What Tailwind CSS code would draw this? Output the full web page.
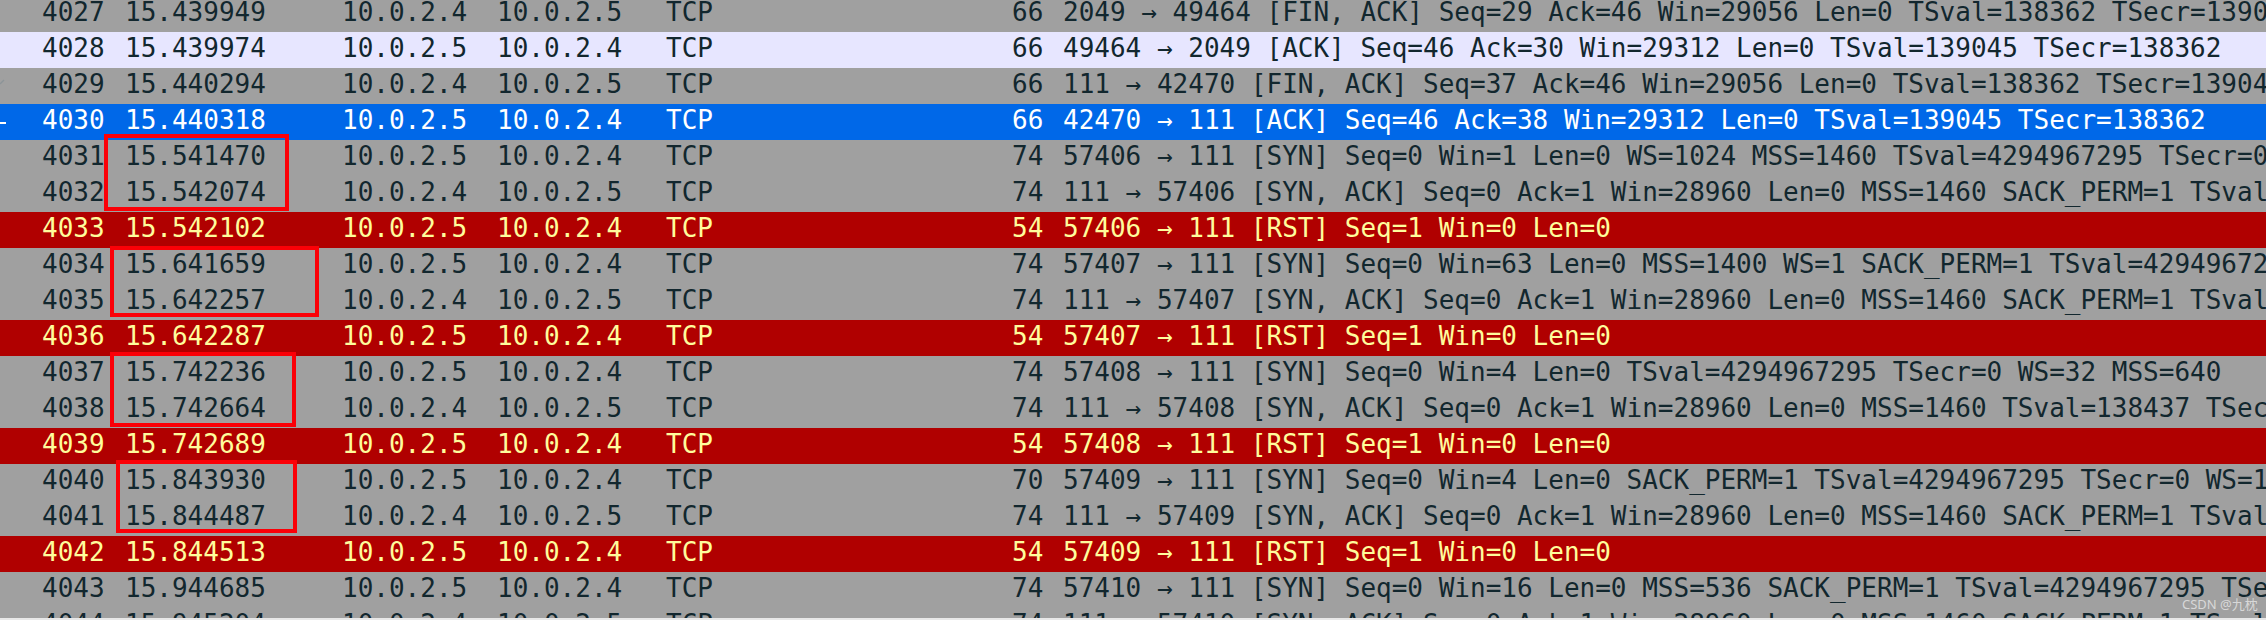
<!DOCTYPE html>
<html lang="en">
<head>
  <meta charset="UTF-8" />
  <title>Wireshark capture</title>
  <script src="https://cdn.jsdelivr.net/npm/@tailwindcss/browser@4"></script>
</head>
<body class="bg-[#e8e8e8]">
  <div class="relative w-[2266px] h-[620px] overflow-hidden">
    <div class="h-[618px] overflow-hidden bg-[#a0a0a0] font-['DejaVu_Sans_Mono',monospace] text-[26px] leading-[32px] text-[#12272e] whitespace-nowrap">
      <div class="-mt-[4px]">
        <div class="flex h-9"><span class="w-[125px] shrink-0 pl-[42px]">4027</span><span class="w-[217px] shrink-0">15.439949</span><span class="w-[155px] shrink-0">10.0.2.4</span><span class="w-[169px] shrink-0">10.0.2.5</span><span class="w-[346px] shrink-0">TCP</span><span class="w-[51px] shrink-0">66</span><span>2049 → 49464 [FIN, ACK] Seq=29 Ack=46 Win=29056 Len=0 TSval=138362 TSecr=139045</span></div>
        <div class="flex h-9 bg-[#e7e6ff]"><span class="w-[125px] shrink-0 pl-[42px]">4028</span><span class="w-[217px] shrink-0">15.439974</span><span class="w-[155px] shrink-0">10.0.2.5</span><span class="w-[169px] shrink-0">10.0.2.4</span><span class="w-[346px] shrink-0">TCP</span><span class="w-[51px] shrink-0">66</span><span>49464 → 2049 [ACK] Seq=46 Ack=30 Win=29312 Len=0 TSval=139045 TSecr=138362</span></div>
        <div class="flex h-9"><span class="w-[125px] shrink-0 pl-[42px]">4029</span><span class="w-[217px] shrink-0">15.440294</span><span class="w-[155px] shrink-0">10.0.2.4</span><span class="w-[169px] shrink-0">10.0.2.5</span><span class="w-[346px] shrink-0">TCP</span><span class="w-[51px] shrink-0">66</span><span>111 → 42470 [FIN, ACK] Seq=37 Ack=46 Win=29056 Len=0 TSval=138362 TSecr=139045</span></div>
        <div class="flex h-9 bg-[#0068e8] text-white"><span class="w-[125px] shrink-0 pl-[42px]">4030</span><span class="w-[217px] shrink-0">15.440318</span><span class="w-[155px] shrink-0">10.0.2.5</span><span class="w-[169px] shrink-0">10.0.2.4</span><span class="w-[346px] shrink-0">TCP</span><span class="w-[51px] shrink-0">66</span><span>42470 → 111 [ACK] Seq=46 Ack=38 Win=29312 Len=0 TSval=139045 TSecr=138362</span></div>
        <div class="flex h-9"><span class="w-[125px] shrink-0 pl-[42px]">4031</span><span class="w-[217px] shrink-0">15.541470</span><span class="w-[155px] shrink-0">10.0.2.5</span><span class="w-[169px] shrink-0">10.0.2.4</span><span class="w-[346px] shrink-0">TCP</span><span class="w-[51px] shrink-0">74</span><span>57406 → 111 [SYN] Seq=0 Win=1 Len=0 WS=1024 MSS=1460 TSval=4294967295 TSecr=0</span></div>
        <div class="flex h-9"><span class="w-[125px] shrink-0 pl-[42px]">4032</span><span class="w-[217px] shrink-0">15.542074</span><span class="w-[155px] shrink-0">10.0.2.4</span><span class="w-[169px] shrink-0">10.0.2.5</span><span class="w-[346px] shrink-0">TCP</span><span class="w-[51px] shrink-0">74</span><span>111 → 57406 [SYN, ACK] Seq=0 Ack=1 Win=28960 Len=0 MSS=1460 SACK_PERM=1 TSval=138362</span></div>
        <div class="flex h-9 bg-[#b00000] text-[#fffc9c]"><span class="w-[125px] shrink-0 pl-[42px]">4033</span><span class="w-[217px] shrink-0">15.542102</span><span class="w-[155px] shrink-0">10.0.2.5</span><span class="w-[169px] shrink-0">10.0.2.4</span><span class="w-[346px] shrink-0">TCP</span><span class="w-[51px] shrink-0">54</span><span>57406 → 111 [RST] Seq=1 Win=0 Len=0</span></div>
        <div class="flex h-9"><span class="w-[125px] shrink-0 pl-[42px]">4034</span><span class="w-[217px] shrink-0">15.641659</span><span class="w-[155px] shrink-0">10.0.2.5</span><span class="w-[169px] shrink-0">10.0.2.4</span><span class="w-[346px] shrink-0">TCP</span><span class="w-[51px] shrink-0">74</span><span>57407 → 111 [SYN] Seq=0 Win=63 Len=0 MSS=1400 WS=1 SACK_PERM=1 TSval=4294967295</span></div>
        <div class="flex h-9"><span class="w-[125px] shrink-0 pl-[42px]">4035</span><span class="w-[217px] shrink-0">15.642257</span><span class="w-[155px] shrink-0">10.0.2.4</span><span class="w-[169px] shrink-0">10.0.2.5</span><span class="w-[346px] shrink-0">TCP</span><span class="w-[51px] shrink-0">74</span><span>111 → 57407 [SYN, ACK] Seq=0 Ack=1 Win=28960 Len=0 MSS=1460 SACK_PERM=1 TSval=138437</span></div>
        <div class="flex h-9 bg-[#b00000] text-[#fffc9c]"><span class="w-[125px] shrink-0 pl-[42px]">4036</span><span class="w-[217px] shrink-0">15.642287</span><span class="w-[155px] shrink-0">10.0.2.5</span><span class="w-[169px] shrink-0">10.0.2.4</span><span class="w-[346px] shrink-0">TCP</span><span class="w-[51px] shrink-0">54</span><span>57407 → 111 [RST] Seq=1 Win=0 Len=0</span></div>
        <div class="flex h-9"><span class="w-[125px] shrink-0 pl-[42px]">4037</span><span class="w-[217px] shrink-0">15.742236</span><span class="w-[155px] shrink-0">10.0.2.5</span><span class="w-[169px] shrink-0">10.0.2.4</span><span class="w-[346px] shrink-0">TCP</span><span class="w-[51px] shrink-0">74</span><span>57408 → 111 [SYN] Seq=0 Win=4 Len=0 TSval=4294967295 TSecr=0 WS=32 MSS=640</span></div>
        <div class="flex h-9"><span class="w-[125px] shrink-0 pl-[42px]">4038</span><span class="w-[217px] shrink-0">15.742664</span><span class="w-[155px] shrink-0">10.0.2.4</span><span class="w-[169px] shrink-0">10.0.2.5</span><span class="w-[346px] shrink-0">TCP</span><span class="w-[51px] shrink-0">74</span><span>111 → 57408 [SYN, ACK] Seq=0 Ack=1 Win=28960 Len=0 MSS=1460 TSval=138437 TSecr=0</span></div>
        <div class="flex h-9 bg-[#b00000] text-[#fffc9c]"><span class="w-[125px] shrink-0 pl-[42px]">4039</span><span class="w-[217px] shrink-0">15.742689</span><span class="w-[155px] shrink-0">10.0.2.5</span><span class="w-[169px] shrink-0">10.0.2.4</span><span class="w-[346px] shrink-0">TCP</span><span class="w-[51px] shrink-0">54</span><span>57408 → 111 [RST] Seq=1 Win=0 Len=0</span></div>
        <div class="flex h-9"><span class="w-[125px] shrink-0 pl-[42px]">4040</span><span class="w-[217px] shrink-0">15.843930</span><span class="w-[155px] shrink-0">10.0.2.5</span><span class="w-[169px] shrink-0">10.0.2.4</span><span class="w-[346px] shrink-0">TCP</span><span class="w-[51px] shrink-0">70</span><span>57409 → 111 [SYN] Seq=0 Win=4 Len=0 SACK_PERM=1 TSval=4294967295 TSecr=0 WS=1</span></div>
        <div class="flex h-9"><span class="w-[125px] shrink-0 pl-[42px]">4041</span><span class="w-[217px] shrink-0">15.844487</span><span class="w-[155px] shrink-0">10.0.2.4</span><span class="w-[169px] shrink-0">10.0.2.5</span><span class="w-[346px] shrink-0">TCP</span><span class="w-[51px] shrink-0">74</span><span>111 → 57409 [SYN, ACK] Seq=0 Ack=1 Win=28960 Len=0 MSS=1460 SACK_PERM=1 TSval=138437</span></div>
        <div class="flex h-9 bg-[#b00000] text-[#fffc9c]"><span class="w-[125px] shrink-0 pl-[42px]">4042</span><span class="w-[217px] shrink-0">15.844513</span><span class="w-[155px] shrink-0">10.0.2.5</span><span class="w-[169px] shrink-0">10.0.2.4</span><span class="w-[346px] shrink-0">TCP</span><span class="w-[51px] shrink-0">54</span><span>57409 → 111 [RST] Seq=1 Win=0 Len=0</span></div>
        <div class="flex h-9"><span class="w-[125px] shrink-0 pl-[42px]">4043</span><span class="w-[217px] shrink-0">15.944685</span><span class="w-[155px] shrink-0">10.0.2.5</span><span class="w-[169px] shrink-0">10.0.2.4</span><span class="w-[346px] shrink-0">TCP</span><span class="w-[51px] shrink-0">74</span><span>57410 → 111 [SYN] Seq=0 Win=16 Len=0 MSS=536 SACK_PERM=1 TSval=4294967295 TSecr=0</span></div>
        <div class="flex h-9"><span class="w-[125px] shrink-0 pl-[42px]">4044</span><span class="w-[217px] shrink-0">15.945204</span><span class="w-[155px] shrink-0">10.0.2.4</span><span class="w-[169px] shrink-0">10.0.2.5</span><span class="w-[346px] shrink-0">TCP</span><span class="w-[51px] shrink-0">74</span><span>111 → 57410 [SYN, ACK] Seq=0 Ack=1 Win=28960 Len=0 MSS=1460 SACK_PERM=1 TSval=138437</span></div>
      </div>
    </div>
    <!-- related packet marks in the left gutter -->
    <svg class="absolute left-0 top-[78px]" width="5" height="8" viewBox="0 0 5 8"><path d="M0 6 L4 2" stroke="#8c9498" stroke-width="1.5" fill="none"/></svg>
    <div class="absolute left-0 top-[122px] w-[6px] h-[2px] bg-white"></div>
    <!-- red annotation boxes drawn over the table -->
    <div class="absolute left-[104px] top-[134px] w-[185px] h-[77px] border-4 border-[#fb0007]"></div>
    <div class="absolute left-[110px] top-[246px] w-[209px] h-[71px] border-4 border-[#fb0007]"></div>
    <div class="absolute left-[110px] top-[352px] w-[186px] h-[75px] border-4 border-[#fb0007]"></div>
    <div class="absolute left-[116px] top-[460px] w-[181px] h-[73px] border-4 border-[#fb0007]"></div>
    <span class="absolute left-[2182px] top-[596px] text-[13px] leading-[16px] text-white/60 font-['Noto_Sans','Noto_Sans_CJK_SC',sans-serif]">CSDN @九枕</span>
  </div>
</body>
</html>
